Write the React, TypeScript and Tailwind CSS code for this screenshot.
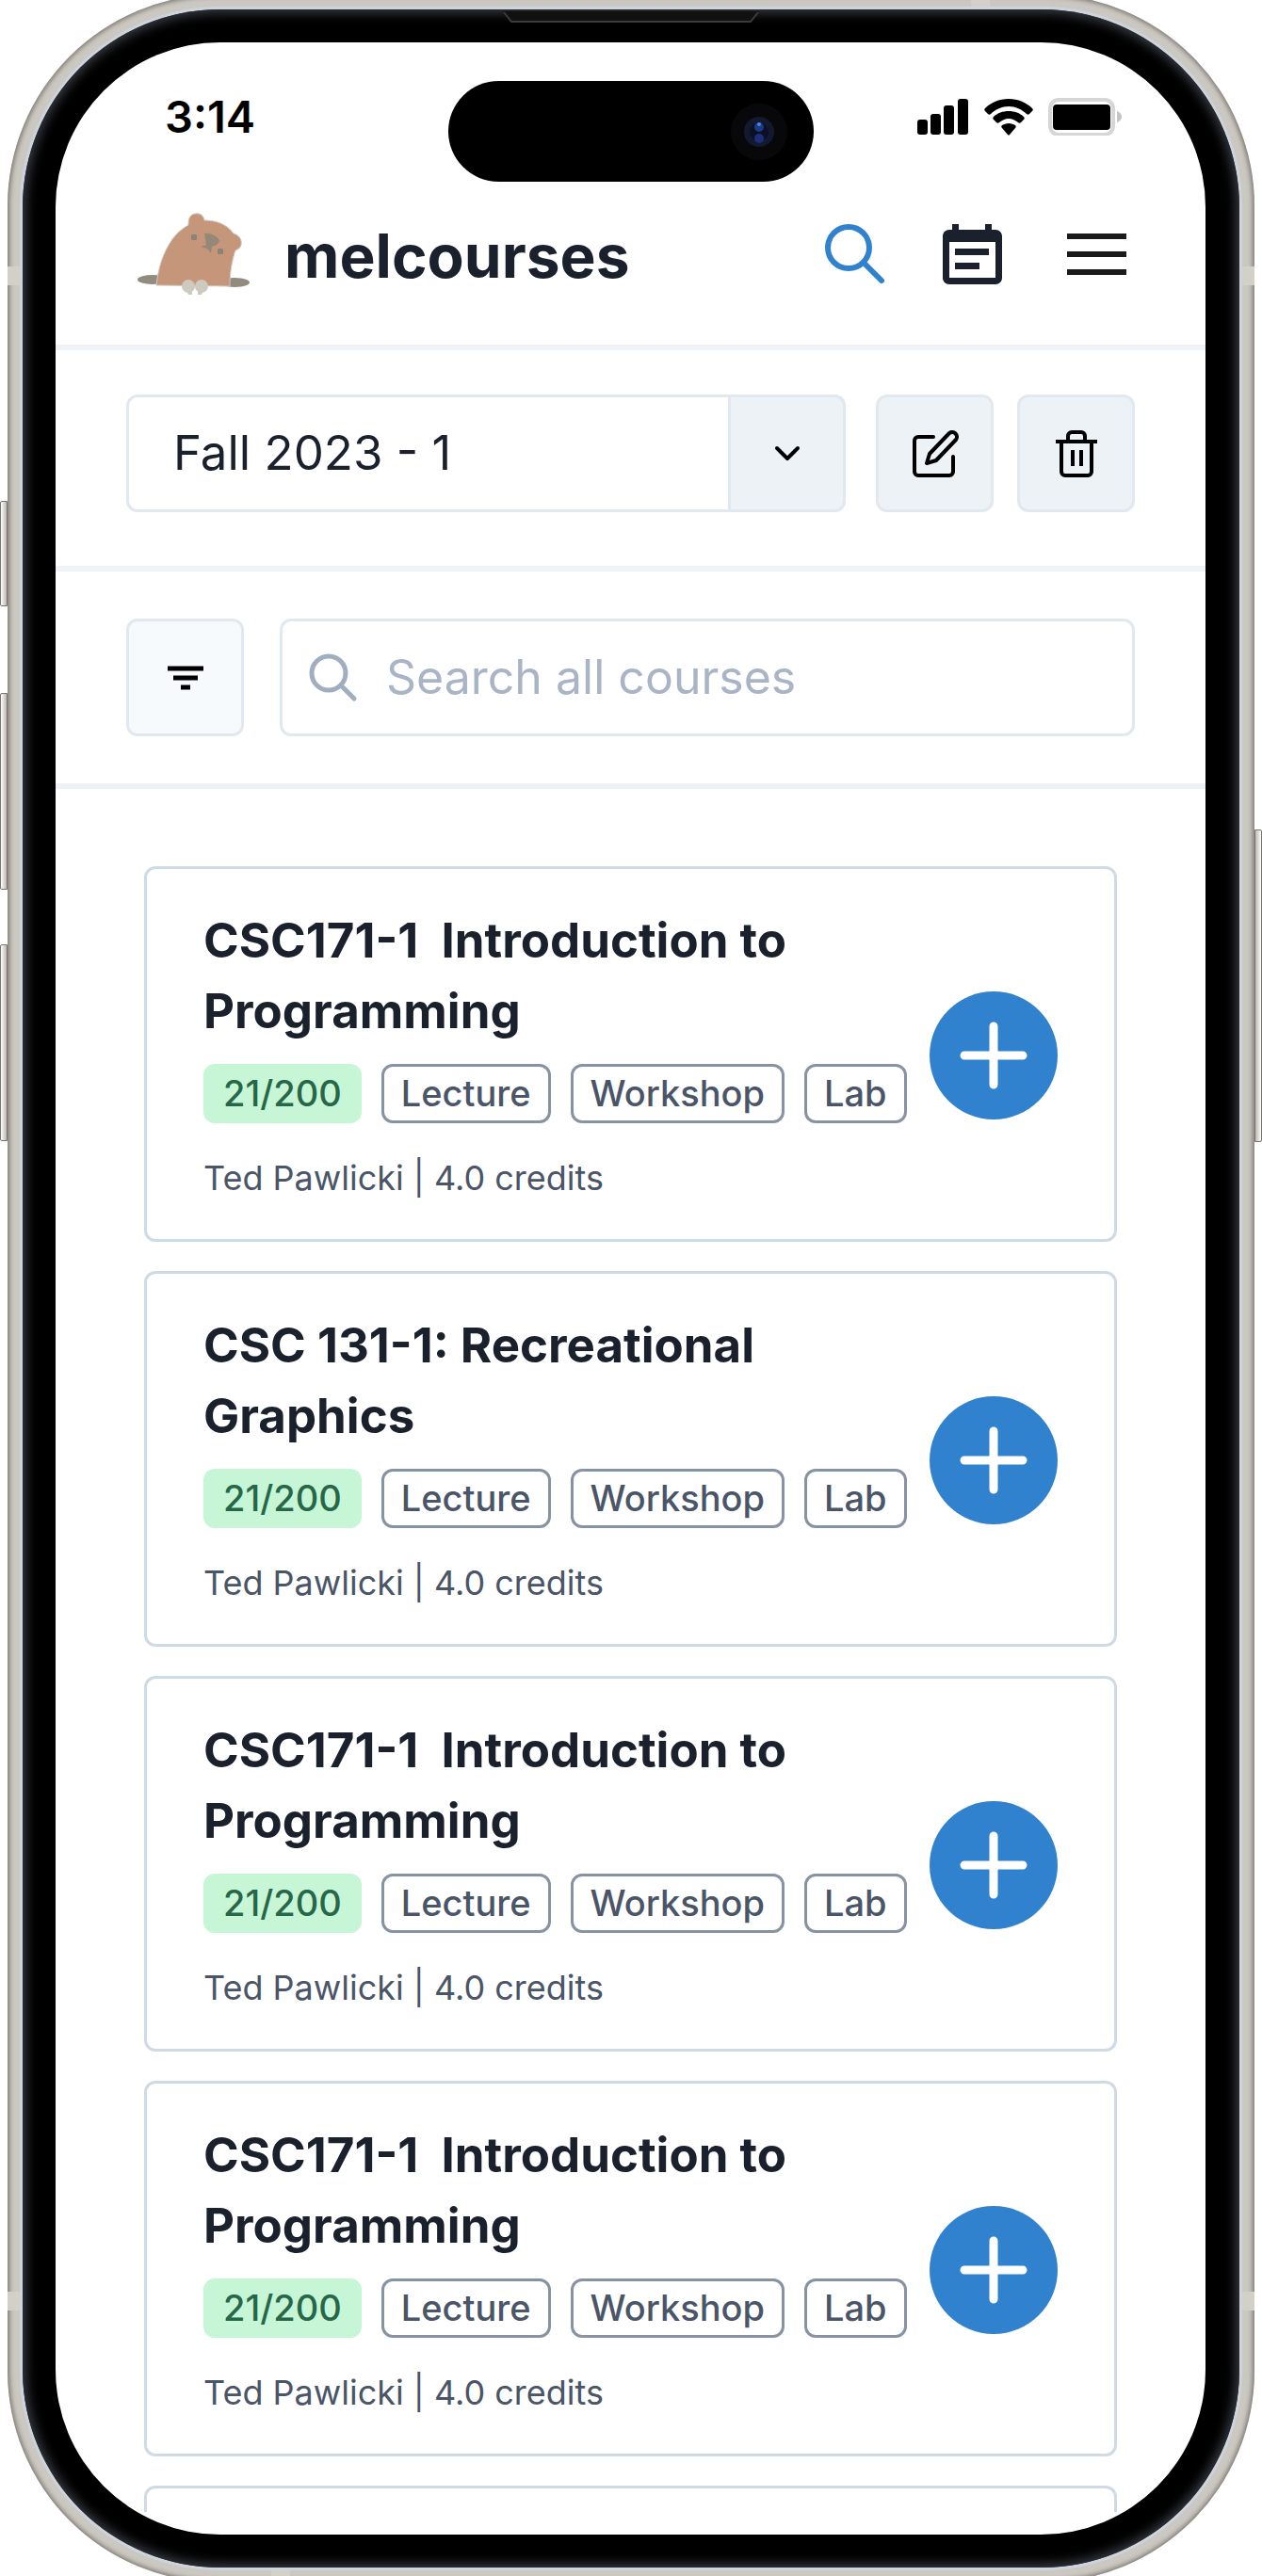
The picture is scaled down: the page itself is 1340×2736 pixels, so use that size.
import { useState } from "react";

interface Course {
  id: number;
  title: string;
  enrolled: string;
  sections: string[];
  instructor: string;
  credits: string;
}

const SECTIONS = ["Lecture", "Workshop", "Lab"];

const COURSES: Course[] = [
  { id: 1, title: "CSC171-1  Introduction to Programming", enrolled: "21/200", sections: SECTIONS, instructor: "Ted Pawlicki", credits: "4.0 credits" },
  { id: 2, title: "CSC 131-1: Recreational Graphics", enrolled: "21/200", sections: SECTIONS, instructor: "Ted Pawlicki", credits: "4.0 credits" },
  { id: 3, title: "CSC171-1  Introduction to Programming", enrolled: "21/200", sections: SECTIONS, instructor: "Ted Pawlicki", credits: "4.0 credits" },
  { id: 4, title: "CSC171-1  Introduction to Programming", enrolled: "21/200", sections: SECTIONS, instructor: "Ted Pawlicki", credits: "4.0 credits" },
];

function MoleLogo() {
  return (
    <svg width="120" height="88" viewBox="0 0 120 88" aria-hidden="true">
      <ellipse cx="16" cy="71" rx="16" ry="5" fill="#928c80" />
      <ellipse cx="103" cy="74" rx="16" ry="5" fill="#928c80" />
      <path
        d="M20 77C22 60 26 44 37 28C43 20 49 16 54 13C54 7 55 2 61 1C67 0 70 3 71 8C82 8 94 11 102 22C108 24 111 28 110 34C109 38 106 39 104 40C101 48 98 62 98 78Z"
        fill="#c6967b"
        stroke="#cfcabf"
        strokeWidth="1"
      />
      <rect x="57" y="23" width="6" height="6" rx="1" fill="#8b8379" />
      <rect x="85" y="38" width="6" height="6" rx="1" fill="#8b8379" />
      <path d="M71 22C77 21 86 25 87 30C85 34 82 35 79 36L78 43L74 38L67 36L73 34Z" fill="#968878" />
      <circle cx="54" cy="78" r="7" fill="#cfcabf" />
      <circle cx="68" cy="78" r="7" fill="#cfcabf" />
      <path d="M51 80h7v7h-4zM64 80h7l-3 7h-4z" fill="#cfcabf" />
    </svg>
  );
}

function SignalIcon() {
  return (
    <svg width="55" height="40" viewBox="0 0 55 40" aria-hidden="true">
      <rect x="0" y="23" width="11" height="16" rx="3" />
      <rect x="14" y="17" width="11" height="22" rx="3" />
      <rect x="28" y="8" width="11" height="31" rx="3" />
      <rect x="43" y="1" width="11" height="38" rx="3" />
    </svg>
  );
}

function WifiIcon() {
  return (
    <svg width="52" height="40" viewBox="0 0 52 40" aria-hidden="true">
      <path d="M26 1C16 1 7 5 1 11c-1 1-1 2 0 3l3 3c1 1 2 1 3 0c5-5 12-8 19-8s14 3 19 8c1 1 2 1 3 0l3-3c1-1 1-2 0-3C45 5 36 1 26 1z" />
      <path d="M26 14c-6 0-12 2-16 6c-1 1-1 2 0 3l3 3c1 1 2 1 3 0c3-2 6-4 10-4s7 2 10 4c1 1 2 1 3 0l3-3c1-1 1-2 0-3c-4-4-10-6-16-6z" />
      <path d="M26 27c-3 0-5 1-7 2c-1 1-1 2 0 3l6 7c1 1 1 1 2 0l6-7c1-1 1-2 0-3c-2-1-4-2-7-2z" />
    </svg>
  );
}

function BatteryIcon() {
  return (
    <svg width="79" height="40" viewBox="0 0 79 40" aria-hidden="true">
      <rect x="2" y="2" width="67" height="37" rx="9" fill="none" stroke="#d6d6d6" strokeWidth="4" />
      <rect x="5" y="7" width="61" height="27" rx="4" />
      <path d="M73 14c3 1 5 3 5 6s-2 5-5 6z" fill="#c4c4c4" />
    </svg>
  );
}

function AppSearchIcon() {
  return (
    <svg width="72" height="68" viewBox="0 0 72 68" fill="none" stroke="#3182ce" strokeWidth="6" strokeLinecap="round" aria-hidden="true">
      <circle cx="29" cy="27" r="22" />
      <path d="M45 43l19 19" />
    </svg>
  );
}

function CalendarIcon() {
  return (
    <svg width="72" height="68" viewBox="0 0 72 68" fill="#1a202c" aria-hidden="true">
      <path
        fillRule="evenodd"
        d="M11 2h7v6h28V2h7v6h4c4 0 7 3 7 7v44c0 4-3 7-7 7H8c-4 0-7-3-7-7V15c0-4 3-7 7-7h3zM8 21v38h49V21z"
      />
      <rect x="14" y="28" width="36" height="7" />
      <rect x="14" y="43" width="26" height="7" />
    </svg>
  );
}

function MenuIcon() {
  return (
    <svg width="72" height="68" viewBox="0 0 72 68" stroke="#1a1a1a" strokeWidth="6" aria-hidden="true">
      <path d="M5 15h63M5 34h63M5 53h63" />
    </svg>
  );
}

function StatusBar() {
  return (
    <div className="grid grid-cols-[1fr_388px_1fr] pt-[41px]">
      <div className="flex h-[76px] items-center pl-[116px] text-[47px] font-semibold text-black">
        3:14
      </div>
      <div className="flex h-[107px] items-center justify-end rounded-full bg-black pr-7">
        <svg width="60" height="60" viewBox="0 0 60 60" aria-hidden="true">
          <circle cx="30" cy="30" r="30" fill="#08080a" />
          <circle cx="30" cy="30" r="16" fill="#131a30" />
          <circle cx="30" cy="30" r="10" fill="#0b1026" />
          <circle cx="30" cy="25" r="5" fill="#1d3a80" />
          <circle cx="30" cy="22" r="2" fill="#3f8be0" />
          <circle cx="30" cy="37" r="5" fill="#1e2f7a" />
        </svg>
      </div>
      <div className="flex h-[76px] items-center justify-end gap-4 pr-[88px]">
        <SignalIcon />
        <WifiIcon />
        <BatteryIcon />
      </div>
    </div>
  );
}

function Header() {
  return (
    <header className="flex items-center justify-between border-b-6 border-[#eff3f7] pt-[33px] pr-20 pb-[52px] pl-[87px]">
      <a href="#home" className="flex items-center gap-9">
        <MoleLogo />
        <span className="pt-1 text-[64px] leading-[84px] font-bold">melcourses</span>
      </a>
      <nav className="flex items-center gap-14">
        <button type="button" aria-label="Search">
          <AppSearchIcon />
        </button>
        <button type="button" aria-label="Schedule">
          <CalendarIcon />
        </button>
        <button type="button" aria-label="Menu">
          <MenuIcon />
        </button>
      </nav>
    </header>
  );
}

function TermPicker() {
  return (
    <section className="flex items-center border-b-6 border-[#eff3f7] px-[75px] pt-[47px] pb-[57px]">
      <div className="relative mr-8 flex-1">
        <select
          aria-label="Term"
          className="block h-[125px] w-full appearance-none rounded-xl border-3 border-[#e2e8f0] bg-white pl-[47px] text-[51px]"
        >
          <option>Fall 2023 - 1</option>
        </select>
        <div className="pointer-events-none absolute inset-y-0 right-0 flex w-[125px] items-center justify-center rounded-r-xl border-3 border-[#e2e8f0] bg-[#edf2f7]">
          <svg width="30" height="20" viewBox="0 0 30 20" fill="none" stroke="#000" strokeWidth="4" strokeLinecap="round" strokeLinejoin="round" aria-hidden="true">
            <path d="M4 4l11 11L26 4" />
          </svg>
        </div>
      </div>
      <div className="flex gap-[25px]">
        <button
          type="button"
          aria-label="Edit schedule"
          className="flex size-[125px] items-center justify-center rounded-xl border-3 border-[#e2e8f0] bg-[#edf2f7]"
        >
          <svg width="52" height="52" viewBox="0 0 52 52" fill="none" stroke="#000" strokeWidth="4" strokeLinecap="round" strokeLinejoin="round" aria-hidden="true">
            <path d="M24 8H8a4 4 0 0 0-4 4v33a4 4 0 0 0 4 4h33a4 4 0 0 0 4-4V29" />
            <path d="M41 4a5 5 0 0 1 7 7L27 33l-10 3l3-10z" />
          </svg>
        </button>
        <button
          type="button"
          aria-label="Delete schedule"
          className="flex size-[125px] items-center justify-center rounded-xl border-3 border-[#e2e8f0] bg-[#edf2f7]"
        >
          <svg width="46" height="52" viewBox="0 0 46 52" fill="none" stroke="#000" strokeWidth="4" strokeLinejoin="round" aria-hidden="true">
            <path d="M1 13h44M7 13v32a4 4 0 0 0 4 4h24a4 4 0 0 0 4-4V13M14 13V7a4 4 0 0 1 4-4h10a4 4 0 0 1 4 4v6" />
            <path d="M19 22v17M28 22v17" />
          </svg>
        </button>
      </div>
    </section>
  );
}

function SearchBar() {
  const [query, setQuery] = useState("");

  return (
    <section className="flex items-center gap-[38px] border-b-6 border-[#eff3f7] px-[75px] pt-[50px] pb-[50px]">
      <button
        type="button"
        aria-label="Filter"
        className="flex size-[125px] shrink-0 items-center justify-center rounded-xl border-3 border-[#e2e8f0] bg-[#f7fafc]"
      >
        <svg width="38" height="28" viewBox="0 0 38 28" stroke="#000" strokeWidth="5" aria-hidden="true">
          <path d="M0 4h38M6 14h26M14 24h10" />
        </svg>
      </button>
      <label className="flex h-[125px] min-w-0 flex-1 items-center gap-[30px] rounded-xl border-3 border-[#e2e8f0] px-7">
        <svg className="shrink-0" width="52" height="52" viewBox="0 0 52 52" fill="none" stroke="#a0aec0" strokeWidth="5" strokeLinecap="round" aria-hidden="true">
          <circle cx="21" cy="21" r="18" />
          <path d="M34 34l14 14" />
        </svg>
        <input
          type="search"
          aria-label="Search all courses"
          placeholder="Search all courses"
          value={query}
          onChange={(e) => setQuery(e.target.value)}
          className="min-w-0 flex-1 text-[50px] outline-none placeholder:text-[#a9b5c6]"
        />
      </label>
    </section>
  );
}

function CourseCard({ course }: { course: Course }) {
  return (
    <li className="flex items-center rounded-xl border-3 border-[#d0dae5] pt-[38px] pr-[60px] pb-[35px] pl-[60px]">
      <div className="flex-1">
        <h2 className="w-[700px] text-[51px] leading-[75px] font-bold whitespace-pre-wrap">
          {course.title}
        </h2>
        <div className="mt-[19px] flex gap-[21px] text-[38px] leading-[57px] font-medium whitespace-nowrap text-[#4a5568]">
          <span className="rounded-xl border-3 border-[#c6f6d5] bg-[#c6f6d5] px-[18px] text-[#276749]">
            {course.enrolled}
          </span>
          {course.sections.map((section) => (
            <span key={section} className="rounded-xl border-3 border-[#8792a3] px-[18px]">
              {section}
            </span>
          ))}
        </div>
        <p className="mt-7 text-[36px] leading-[60px] text-[#4a5568]">
          {course.instructor} | {course.credits}
        </p>
      </div>
      <button
        type="button"
        aria-label={`Add ${course.title}`}
        className="flex size-[136px] shrink-0 items-center justify-center rounded-full bg-[#3182ce]"
      >
        <svg width="72" height="72" viewBox="0 0 72 72" stroke="#fff" strokeWidth="9" strokeLinecap="round" aria-hidden="true">
          <path d="M36 5v62M5 36h62" />
        </svg>
      </button>
    </li>
  );
}

export default function App() {
  return (
    <div className="relative overflow-hidden bg-white px-2 font-[Inter,sans-serif] text-[#1a202c] [font-optical-sizing:none]">
      {/* Side buttons */}
      <div className="absolute top-[532px] left-0 h-[112px] w-2 rounded-l-xs border border-[#77746f] bg-linear-to-r from-white to-[#bcb8ae]" />
      <div className="absolute top-[736px] left-0 h-[209px] w-2 rounded-l-xs border border-[#77746f] bg-linear-to-r from-white to-[#bcb8ae]" />
      <div className="absolute top-[1003px] left-0 h-[209px] w-2 rounded-l-xs border border-[#77746f] bg-linear-to-r from-white to-[#bcb8ae]" />
      <div className="absolute top-[881px] right-0 h-[332px] w-2 rounded-r-xs border border-[#77746f] bg-linear-to-l from-white to-[#bcb8ae]" />

      {/* Metal rail */}
      <div className="relative -my-1.5 overflow-hidden rounded-[225px] bg-[#cbc8c1] p-4 shadow-[inset_0_0_5px_2px_#7d7871]">
        {/* Antenna bands */}
        <div className="absolute top-[289px] left-0 h-5 w-full bg-[#d3d0c8]" />
        <div className="absolute bottom-[289px] left-0 h-5 w-full bg-[#d3d0c8]" />
        <div className="absolute top-0 right-[281px] h-4 w-5 bg-[#d3d0c8]" />
        <div className="absolute bottom-0 left-[280px] h-4 w-5 bg-[#d3d0c8]" />

        {/* Bezel */}
        <div className="relative rounded-[210px] bg-black pt-[35px] pr-9 pb-[35px] pl-[35px] shadow-[0_0_0_3px_#cdd4de,inset_0_0_12px_4px_#383b42]">
          {/* Earpiece */}
          <svg className="absolute top-0 left-1/2 -translate-x-1/2" width="272" height="15" viewBox="0 0 272 15" aria-hidden="true">
            <path d="M0 2h272l-8 12H8z" fill="#111" />
            <path d="M1 3l8 10h254l8-10" fill="none" stroke="#3b3b3d" strokeWidth="2" />
          </svg>

          <div className="overflow-hidden rounded-[175px] bg-white">
            <StatusBar />
            <Header />
            <main>
              <TermPicker />
              <SearchBar />
              <ul className="flex flex-col gap-[31px] px-[94px] pt-[82px] pb-6">
                {COURSES.map((course) => (
                  <CourseCard key={course.id} course={course} />
                ))}
                {/* Next card peeking in at the end of the viewport */}
                <li aria-hidden="true" className="h-7 rounded-t-xl border-3 border-b-0 border-[#d0dae5]" />
              </ul>
            </main>
          </div>
        </div>
      </div>
    </div>
  );
}
